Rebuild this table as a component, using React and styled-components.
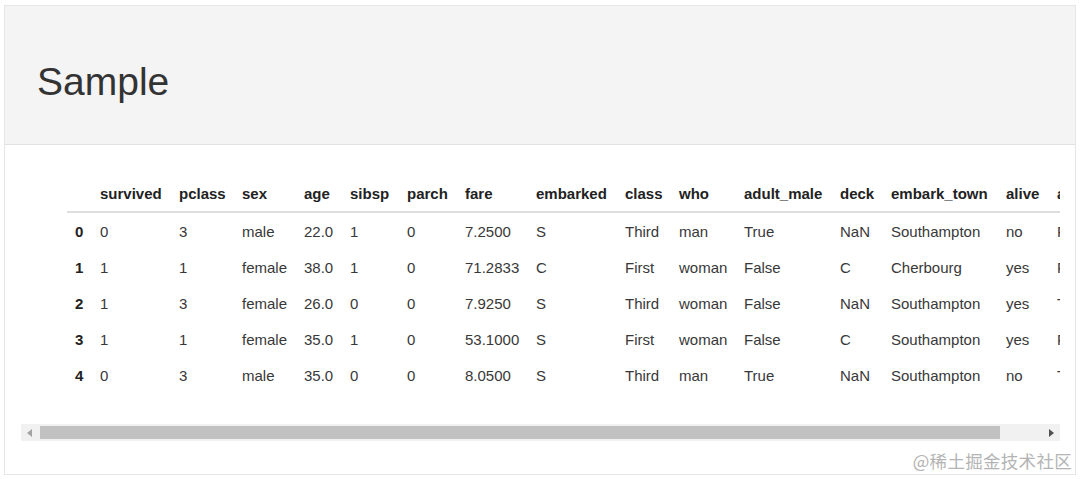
import React from "react";
import styled, { createGlobalStyle } from "styled-components";

const GlobalStyle = createGlobalStyle`
  body {
    margin: 0;
    background: #ffffff;
    font-family: "Liberation Sans", Arial, sans-serif;
  }
`;

const Page = styled.div`
  position: relative;
  width: 1080px;
  height: 479px;
  padding: 5px 0 0 4px;
  box-sizing: border-box;
`;

const Frame = styled.div`
  width: 1072px;
  height: 470px;
  box-sizing: border-box;
  border: 1px solid #e6e6e6;
  display: flex;
  flex-direction: column;
`;

const Header = styled.div`
  height: 139px;
  box-sizing: border-box;
  background: #f4f4f4;
  border-bottom: 1px solid #e2e2e6;
  display: flex;
  align-items: center;
  padding: 14px 0 0 32px;
`;

const Title = styled.h1`
  margin: 0;
  font-size: 39px;
  font-weight: normal;
  color: #333333;
`;

const Body = styled.div`
  padding: 30px 15px 0 16px;
`;

const TableScroll = styled.div`
  overflow: hidden;
  padding-left: 46px;
`;

const Table = styled.table`
  border-collapse: collapse;
  table-layout: fixed;
  font-size: 15px;
  color: #383838;
  white-space: nowrap;
`;

const HeadCell = styled.th`
  width: ${(p) => p.$w}px;
  min-width: ${(p) => p.$w}px;
  box-sizing: border-box;
  height: 37px;
  padding: 0 8px;
  text-align: left;
  font-weight: bold;
  color: #222222;
  border-bottom: 2px solid #dedede;
  overflow: hidden;
`;

const IndexCell = styled.th`
  height: 36px;
  padding: 0 8px;
  text-align: left;
  font-weight: bold;
  color: #222222;
`;

const Cell = styled.td`
  height: 36px;
  padding: 0 8px;
  text-align: left;
  overflow: hidden;
`;

const ScrollTrack = styled.div`
  margin-top: 31px;
  height: 17px;
  background: #f1f1f1;
  display: flex;
  align-items: center;
`;

const ArrowButton = styled.div`
  width: 17px;
  height: 17px;
  display: flex;
  align-items: center;
  justify-content: center;
`;

const Thumb = styled.div`
  height: 13px;
  width: 960px;
  margin-left: 2px;
  background: #c1c1c1;
`;

const Spacer = styled.div`
  flex: 1;
`;

const Watermark = styled.div`
  position: absolute;
  right: 8px;
  bottom: 6px;
  font-family: "Noto Sans CJK SC", "Liberation Sans", sans-serif;
  font-size: 17.5px;
  color: #b4b4b4;
  letter-spacing: 0.3px;
`;

const columns = [
  ["", 25],
  ["survived", 79],
  ["pclass", 63],
  ["sex", 62],
  ["age", 46],
  ["sibsp", 57],
  ["parch", 58],
  ["fare", 71],
  ["embarked", 89],
  ["class", 54],
  ["who", 65],
  ["adult_male", 96],
  ["deck", 51],
  ["embark_town", 115],
  ["alive", 51],
  ["alone", 60],
];

const rows = [
  ["0", "3", "male", "22.0", "1", "0", "7.2500", "S", "Third", "man", "True", "NaN", "Southampton", "no", "False"],
  ["1", "1", "female", "38.0", "1", "0", "71.2833", "C", "First", "woman", "False", "C", "Cherbourg", "yes", "False"],
  ["1", "3", "female", "26.0", "0", "0", "7.9250", "S", "Third", "woman", "False", "NaN", "Southampton", "yes", "True"],
  ["1", "1", "female", "35.0", "1", "0", "53.1000", "S", "First", "woman", "False", "C", "Southampton", "yes", "False"],
  ["0", "3", "male", "35.0", "0", "0", "8.0500", "S", "Third", "man", "True", "NaN", "Southampton", "no", "True"],
];

const Arrow = ({ dir, color }) => (
  <svg width="5" height="8" viewBox="0 0 5 8">
    {dir === "left" ? (
      <polygon points="5,0 5,8 0,4" fill={color} />
    ) : (
      <polygon points="0,0 0,8 5,4" fill={color} />
    )}
  </svg>
);

const App = () => {
  return (
    <Page>
      <GlobalStyle />
      <Frame>
        <Header>
          <Title>Sample</Title>
        </Header>
        <Body>
          <TableScroll>
            <Table>
              <thead>
                <tr>
                  {columns.map(([c, w], k) => (
                    <HeadCell key={k} $w={w}>
                      {c}
                    </HeadCell>
                  ))}
                </tr>
              </thead>
              <tbody>
                {rows.map((r, i) => (
                  <tr key={i}>
                    <IndexCell>{i}</IndexCell>
                    {r.map((v, j) => (
                      <Cell key={j}>{v}</Cell>
                    ))}
                  </tr>
                ))}
              </tbody>
            </Table>
          </TableScroll>
          <ScrollTrack>
            <ArrowButton>
              <Arrow dir="left" color="#a3a3a3" />
            </ArrowButton>
            <Thumb />
            <Spacer />
            <ArrowButton>
              <Arrow dir="right" color="#505050" />
            </ArrowButton>
          </ScrollTrack>
        </Body>
      </Frame>
      <Watermark>@稀土掘金技术社区</Watermark>
    </Page>
  );
};

export default App;
